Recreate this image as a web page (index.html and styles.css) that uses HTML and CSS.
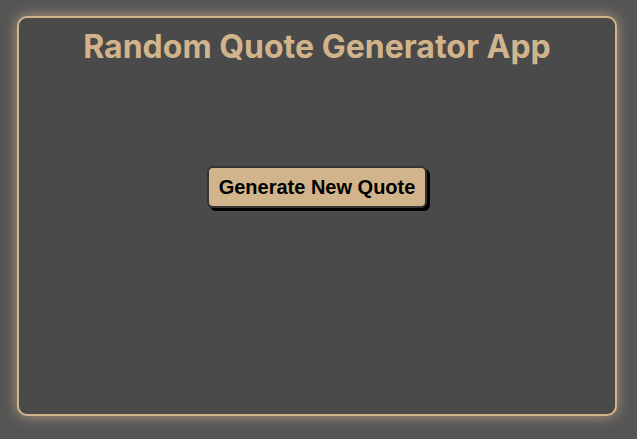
FILE: index.html
```html
<!DOCTYPE html>
<html>
<head>
<meta charset="utf-8">
<link rel="stylesheet" href="styles.css">
</head>
<body>
<div class="card">
  <h1 class="title">Random Quote Generator App</h1>
  <div class="quote"></div>
  <button class="btn">Generate New Quote</button>
</div>
</body>
</html>
```
FILE: styles.css
```css
html, body {
  margin: 0;
  padding: 0;
  background: #555555;
}
body {
  padding: 16px 17px;
  height: 439px;
  box-sizing: border-box;
}
.card {
  width: 600px;
  height: 400px;
  box-sizing: border-box;
  background: #4a4a4a;
  border: 2px solid #d2b48c;
  border-radius: 10px;
  box-shadow: 0 0 14px rgba(210, 180, 140, 0.75);
  display: flex;
  flex-direction: column;
  align-items: center;
}
.title {
  font-family: Inter, "Noto Sans", sans-serif;
  font-weight: 700;
  font-size: 32px;
  line-height: 38px;
  color: #d2b48c;
  margin: 10px 0 0 0;
}
.quote {
  height: 100px;
}
.btn {
  font-family: "Liberation Sans", Arial, sans-serif;
  font-weight: 700;
  font-size: 20px;
  line-height: 22px;
  color: #000;
  background: #d2b48c;
  border: 2px solid #333;
  border-radius: 6px;
  padding: 8px 10px;
  box-shadow: 3px 3px 0 #000;
  cursor: pointer;
}
```
